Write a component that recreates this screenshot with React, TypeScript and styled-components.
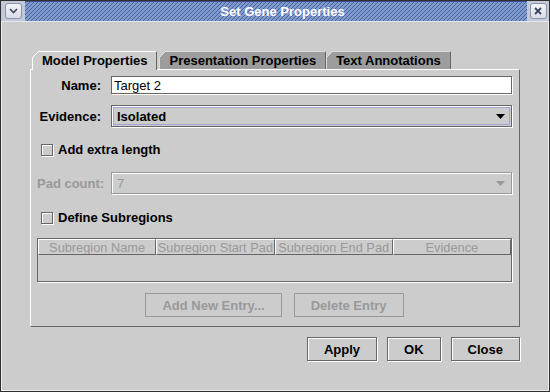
import React from 'react';
import styled, { createGlobalStyle } from 'styled-components';

const GlobalStyle = createGlobalStyle`
  html, body {
    margin: 0;
    padding: 0;
    background: #cccccc;
  }
  body {
    font-family: "Liberation Sans", Arial, sans-serif;
    font-size: 13px;
    color: #000;
  }
  * {
    box-sizing: border-box;
  }
`;

const Window = styled.div`
  width: 550px;
  height: 392px;
  display: flex;
  flex-direction: column;
  background: #cccccc;
  border: 1px solid #2e2e2e;
  box-shadow: inset 0 0 0 1px #eeeeee;
`;

const TitleBar = styled.div`
  height: 21px;
  display: flex;
  border-bottom: 1px solid #e4e7ee;
`;

const TitleSide = styled.div<{ $w: number }>`
  width: ${p => p.$w}px;
  display: flex;
  align-items: center;
  justify-content: center;
  background: #c3c9d8;
`;

const TitleButton = styled.div`
  width: 17px;
  height: 16px;
  border: 1px solid #8a92ac;
  border-radius: 3px;
  background: linear-gradient(#f2f3f7, #d9dde7);
  display: flex;
  align-items: center;
  justify-content: center;
`;

const TitleStripes = styled.div`
  flex: 1;
  display: flex;
  align-items: center;
  justify-content: center;
  padding-left: 13px;
  color: #fff;
  font-weight: bold;
  border-top: 1px solid #3a5290;
  background: repeating-linear-gradient(
    135deg,
    #46629f 0 1.1px,
    #809ace 1.1px 2.83px
  );
`;

const Body = styled.div`
  flex: 1;
  padding: 29px 29px 0 29px;
`;

const TabStrip = styled.div`
  display: flex;
  margin-left: 2px;
  height: 18px;
`;

const Tab = styled.div<{ $active?: boolean }>`
  position: relative;
  z-index: ${p => (p.$active ? 1 : 0)};
  height: ${p => (p.$active ? 19 : 18)}px;
  padding: 0 9px 1px 9px;
  display: flex;
  align-items: center;
  font-weight: bold;
  white-space: nowrap;
  background: ${p => (p.$active ? '#cccccc' : '#9d9d9d')};
  border-top: 1px solid ${p => (p.$active ? '#ffffff' : '#dcdcdc')};
  border-left: 1px solid ${p => (p.$active ? '#ffffff' : '#dcdcdc')};
  border-right: 1px solid #666666;
  margin-right: ${p => (p.$active ? 2 : 0)}px;

  &::before {
    content: '';
    position: absolute;
    left: -1px;
    top: -1px;
    width: 7px;
    height: 7px;
    background: linear-gradient(
      to bottom right,
      #cccccc 0 calc(50% - 0.6px),
      ${p => (p.$active ? '#ffffff' : '#dcdcdc')} calc(50% - 0.6px) calc(50% + 0.6px),
      transparent calc(50% + 0.6px)
    );
  }
`;

const Panel = styled.div`
  display: flex;
  flex-direction: column;
  height: 258px;
  padding: 6px 7px 8px 6px;
  border-top: 1px solid #ffffff;
  border-left: 1px solid #ffffff;
  border-right: 1px solid #666666;
  border-bottom: 1px solid #666666;
`;

const Row = styled.div<{ $top: number; $h: number }>`
  display: flex;
  align-items: center;
  margin-top: ${p => p.$top}px;
  height: ${p => p.$h}px;
`;

const Label = styled.div<{ $disabled?: boolean }>`
  width: 64px;
  margin-right: 10px;
  text-align: right;
  font-weight: bold;
  white-space: nowrap;
  color: ${p => (p.$disabled ? '#999999' : '#000')};
`;

const TextField = styled.div`
  flex: 1;
  height: 100%;
  display: flex;
  align-items: center;
  padding-left: 2px;
  background: #ffffff;
  border: 1px solid #666666;
  box-shadow: 1px 1px 0 #ffffff;
`;

const Combo = styled.div<{ $disabled?: boolean }>`
  flex: 1;
  height: 100%;
  padding: 1px;
  border: 1px solid ${p => (p.$disabled ? '#999999' : '#666666')};
  box-shadow: 1px 1px 0 #ffffff, inset 1px 1px 0 #ffffff;
  color: ${p => (p.$disabled ? '#999999' : '#000')};
  font-weight: ${p => (p.$disabled ? 'normal' : 'bold')};
`;

const ComboInner = styled.div<{ $focused?: boolean }>`
  height: 100%;
  display: flex;
  align-items: center;
  justify-content: space-between;
  padding: 0 4px 0 3px;
  border: 1px solid ${p => (p.$focused ? '#a4a4d2' : 'transparent')};
`;

const CheckRow = styled.label`
  display: flex;
  align-items: center;
  gap: 5px;
  margin-left: 4px;
  font-weight: bold;
`;

const CheckBox = styled.span`
  width: 12px;
  height: 12px;
  border: 1px solid #666666;
  box-shadow: 1px 1px 0 #ffffff, inset 1px 1px 0 #ffffff;
`;

const Table = styled.div`
  height: 44px;
  margin-top: 14px;
  border: 1px solid #666666;
  box-shadow: 1px 1px 0 #ffffff;
`;

const HeaderRow = styled.div`
  display: grid;
  grid-template-columns: repeat(4, 1fr);
  height: 16px;
`;

const HeaderCell = styled.div`
  display: flex;
  align-items: center;
  justify-content: center;
  overflow: hidden;
  white-space: nowrap;
  font-size: 12.8px;
  color: #999999;
  border-top: 1px solid #ffffff;
  border-left: 1px solid #ffffff;
  border-right: 1px solid #666666;
  border-bottom: 1px solid #666666;
`;

const ButtonRow = styled.div<{ $top: number; $align: string }>`
  display: flex;
  justify-content: ${p => p.$align};
  gap: ${p => (p.$align === 'center' ? 12 : 10)}px;
  margin-top: ${p => p.$top}px;
`;

const Button = styled.button<{ $disabled?: boolean }>`
  height: 24px;
  padding: 0 16px;
  font-family: inherit;
  font-size: 13px;
  font-weight: bold;
  color: ${p => (p.$disabled ? '#999999' : '#000')};
  background: #cccccc;
  border: 1px solid ${p => (p.$disabled ? '#999999' : '#666666')};
  box-shadow: ${p =>
    p.$disabled ? 'none' : '1px 1px 0 #ffffff, inset 1px 1px 0 #ffffff'};
  cursor: default;
`;

const Arrow = ({ color }: { color: string }) => (
  <svg width="9" height="5" viewBox="0 0 9 5">
    <polygon points="0,0 9,0 4.5,5" fill={color} />
  </svg>
);

const columns = ['Subregion Name', 'Subregion Start Pad', 'Subregion End Pad', 'Evidence'];

export default function App() {
  return (
    <>
      <GlobalStyle />
      <Window>
        <TitleBar>
          <TitleSide $w={24}>
            <TitleButton>
              <svg width="9" height="6" viewBox="0 0 9 6">
                <polyline points="1,1 4.5,4.5 8,1" fill="none" stroke="#3b4566" strokeWidth="1.6" />
              </svg>
            </TitleButton>
          </TitleSide>
          <TitleStripes>Set Gene Properties</TitleStripes>
          <TitleSide $w={22}>
            <TitleButton>
              <svg width="8" height="8" viewBox="0 0 8 8">
                <path d="M1 1 L7 7 M7 1 L1 7" stroke="#3b4566" strokeWidth="1.8" />
              </svg>
            </TitleButton>
          </TitleSide>
        </TitleBar>

        <Body>
          <TabStrip>
            <Tab $active>Model Properties</Tab>
            <Tab>Presentation Properties</Tab>
            <Tab>Text Annotations</Tab>
          </TabStrip>

          <Panel>
            <Row $top={0} $h={18}>
              <Label>Name:</Label>
              <TextField>Target 2</TextField>
            </Row>

            <Row $top={11} $h={22}>
              <Label>Evidence:</Label>
              <Combo>
                <ComboInner $focused>
                  <span>Isolated</span>
                  <Arrow color="#000" />
                </ComboInner>
              </Combo>
            </Row>

            <Row $top={16} $h={13}>
              <CheckRow>
                <CheckBox />
                Add extra length
              </CheckRow>
            </Row>

            <Row $top={16} $h={22}>
              <Label $disabled>Pad count:</Label>
              <Combo $disabled>
                <ComboInner>
                  <span>7</span>
                  <Arrow color="#999999" />
                </ComboInner>
              </Combo>
            </Row>

            <Row $top={17} $h={13}>
              <CheckRow>
                <CheckBox />
                Define Subregions
              </CheckRow>
            </Row>

            <Table>
              <HeaderRow>
                {columns.map(c => (
                  <HeaderCell key={c}>{c}</HeaderCell>
                ))}
              </HeaderRow>
            </Table>

            <ButtonRow $top={11} $align="center">
              <Button $disabled>Add New Entry...</Button>
              <Button $disabled>Delete Entry</Button>
            </ButtonRow>
          </Panel>

          <ButtonRow $top={10} $align="flex-end">
            <Button>Apply</Button>
            <Button>OK</Button>
            <Button>Close</Button>
          </ButtonRow>
        </Body>
      </Window>
    </>
  );
}
